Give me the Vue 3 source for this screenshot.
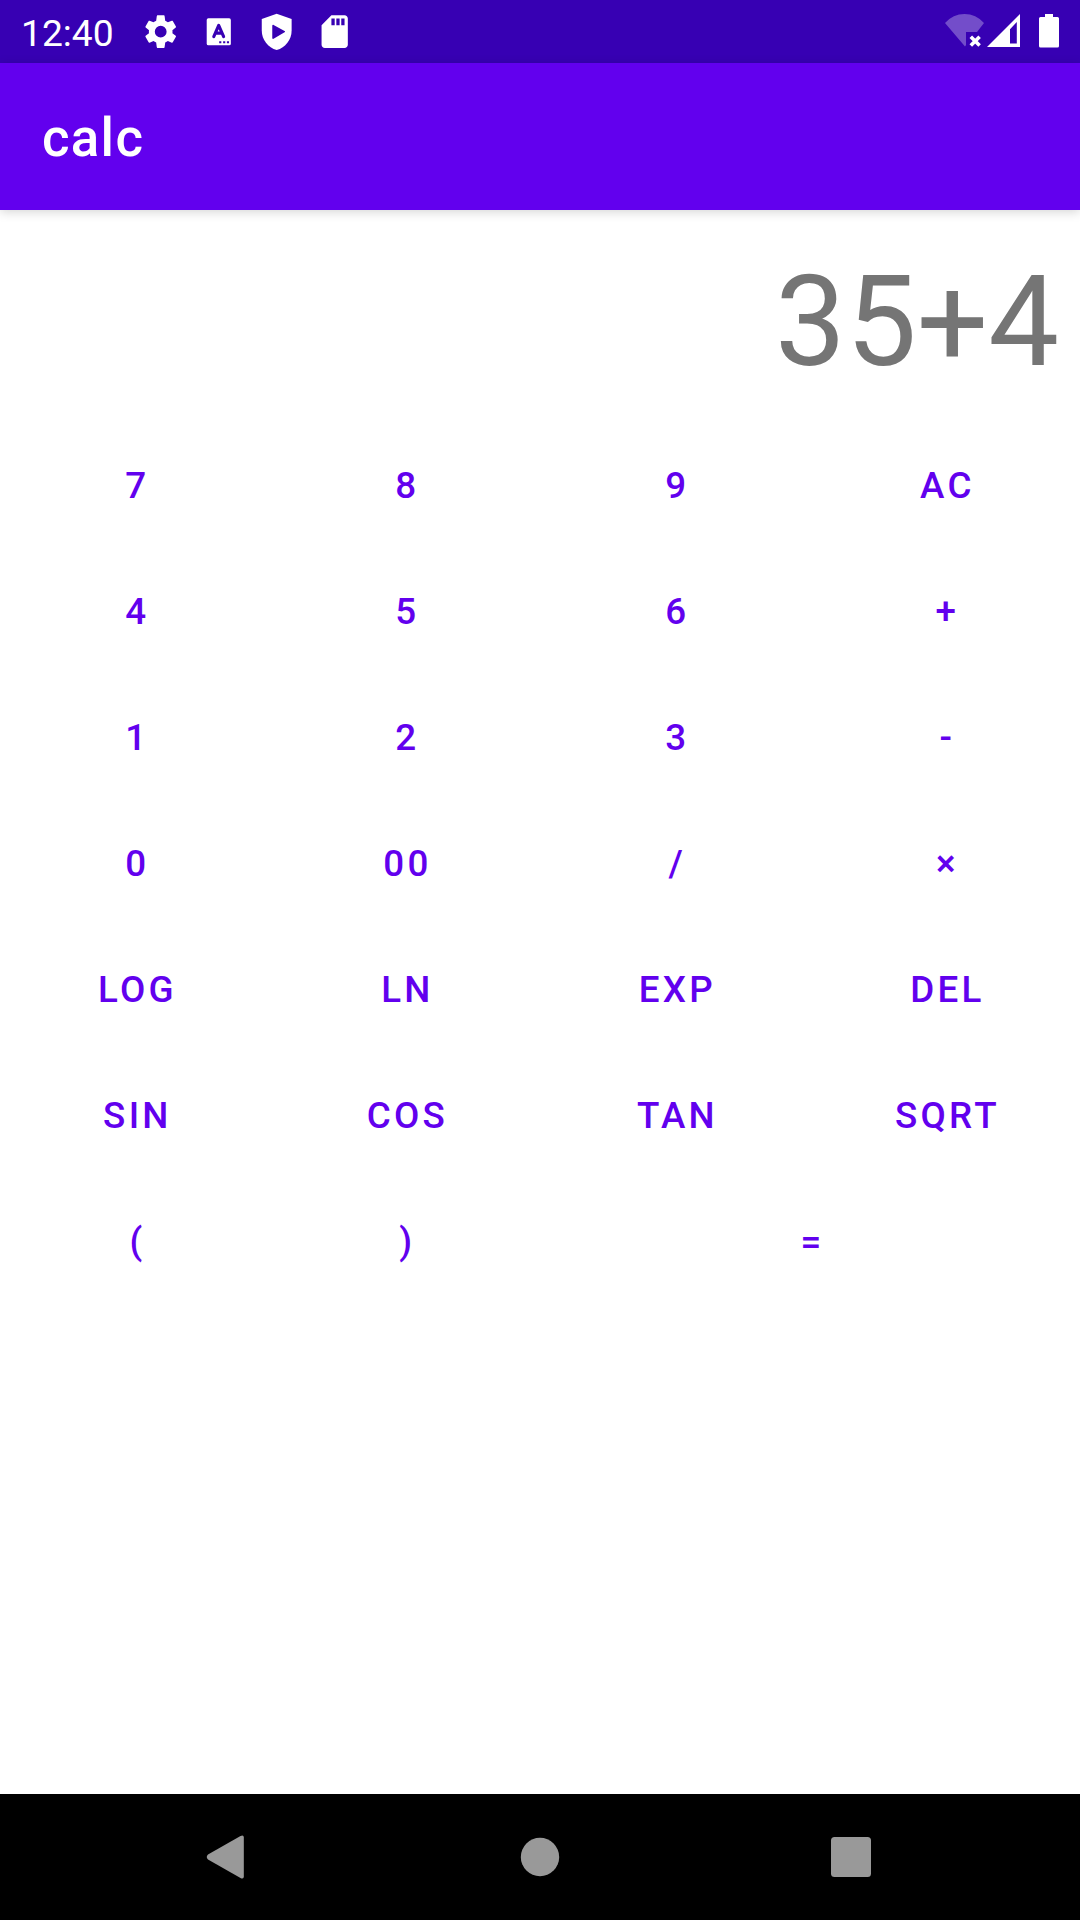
<script setup>
import { ref } from 'vue'

const expression = ref('35+4')
const keys = [
  '7', '8', '9', 'AC',
  '4', '5', '6', '+',
  '1', '2', '3', '-',
  '0', '00', '/', '×',
  'LOG', 'LN', 'EXP', 'DEL',
  'SIN', 'COS', 'TAN', 'SQRT',
  '(', ')', '=',
]
</script>

<template>
  <div class="screen">
    <header class="status">
      <span class="clock">12:40</span>
      <div class="notifications">
        <svg viewBox="0 0 24 24"><path d="M19.14 12.94c.04-.3.06-.61.06-.94 0-.32-.02-.64-.07-.94l2.03-1.58c.18-.14.23-.41.12-.61l-1.92-3.32c-.12-.22-.37-.29-.59-.22l-2.39.96c-.5-.38-1.03-.7-1.62-.94L14.4 2.61c-.04-.24-.24-.61-.48-.61h-3.84c-.24 0-.43.37-.47.61l-.36 2.74c-.59.24-1.13.57-1.62.94l-2.39-.96c-.22-.08-.47 0-.59.22L2.740 8.87c-.12.21-.08.47.12.61l2.03 1.58c-.05.3-.09.63-.09.94s.02.64.07.94l-2.03 1.58c-.18.14-.23.41-.12.61l1.92 3.32c.12.22.37.29.59.22l2.39-.96c.5.38 1.03.7 1.62.94l.36 2.74c.05.24.24.61.48.61h3.84c.24 0 .44-.37.47-.61l.36-2.74c.59-.24 1.13-.56 1.62-.94l2.39.96c.22.08.47 0 .59-.22l1.92-3.32c.12-.22.07-.47-.12-.61l-2.010-1.58zM12 15.6A3.6 3.6 0 1 1 12 8.4a3.6 3.6 0 0 1 0 7.2z" /></svg>
        <svg viewBox="0 0 24 24">
          <rect x="4.7" y="3.8" width="14.7" height="16.5" rx="1" />
          <path class="ink-line" d="M9 15 L12 8.2 L15 15 M10 12.9 H14" />
          <path class="ink" d="M12.3 17.8h1.3v1.3h-1.3zM14.7 17.8h1.3v1.3h-1.3zM17 17.8h1.3v1.3h-1.3z" />
        </svg>
        <svg viewBox="0 0 24 24">
          <path d="M12 1 2.9 4.3v6.9c0 5.7 3.8 10.3 9.1 12 5.3-1.7 9.1-6.3 9.1-12V4.3z" />
          <path class="ink" d="M9.3 8.4c0-.5.4-.7.8-.5l6.7 3.7c.4.2.4.6 0 .8l-6.7 3.9c-.4.2-.8 0-.8-.5z" />
        </svg>
        <svg viewBox="0 0 24 24"><path d="M18 2h-8L4 8v12c0 1.1.9 2 2 2h12c1.1 0 2-.9 2-2V4c0-1.1-.9-2-2-2zm-6 6h-2V4h2v4zm3 0h-2V4h2v4zm3 0h-2V4h2v4z" /></svg>
      </div>
      <svg class="system" viewBox="0 0 160 63">
        <path opacity=".3" d="M25 23Q33 14 44.5 14T64 23L57 32H46V45L45 46.5Z" />
        <path class="cross" d="M50.8 36.8l8.800 8.800M59.6 36.8l-8.8 8.8" />
        <path fill-rule="evenodd" d="M67 47L100 14V47ZM90 29.3V43.5H96.8V22Z" />
        <path d="M125 14h8v3h4.5q1.500 0 1.500 1.500v27.500q0 1.500-1.500 1.500h-17q-1.500 0-1.500-1.500V18.500q0-1.500 1.500-1.500H125z" />
      </svg>
    </header>

    <div class="appbar"><h1>calc</h1></div>

    <main>
      <div class="display">{{ expression }}</div>
      <div class="keypad">
        <button v-for="key in keys" :key="key" type="button" :class="{ wide: key === '=' }">{{ key }}</button>
      </div>
    </main>

    <nav>
      <svg viewBox="0 0 1080 126">
        <path d="M208 60.5L240.5 42Q243.8 40.5 243.8 43.5V82.5Q243.8 85.5 240.5 84L208 65.5Q205.5 63 208 60.5Z" />
        <circle cx="540" cy="63" r="19.2" />
        <rect x="831" y="43" width="40" height="40" rx="3.5" />
      </svg>
    </nav>
  </div>
</template>

<style>
body {
  margin: 0;
}
</style>

<style scoped>
.screen {
  width: 1080px;
  height: 1920px;
  display: flex;
  flex-direction: column;
  overflow: hidden;
  background: #fff;
  font-family: Roboto, sans-serif;
}
.status {
  height: 63px;
  flex: none;
  display: flex;
  align-items: center;
  background: #3700b3;
  color: #fff;
}
.clock {
  width: 120.4px;
  padding-left: 21px;
  font-size: 37.2px;
  line-height: 43px;
  padding-top: 3px;
}
.notifications {
  display: flex;
  gap: 18.6px;
}
.notifications svg {
  width: 39.4px;
  height: 39.4px;
}
svg {
  display: block;
  fill: #fff;
}
.ink {
  fill: #3700b3;
}
.ink-line {
  fill: none;
  stroke: #3700b3;
  stroke-width: 1.9;
  stroke-linecap: round;
  stroke-linejoin: round;
}
.system {
  width: 160px;
  height: 63px;
  margin-left: auto;
}
.cross {
  fill: none;
  stroke: #fff;
  stroke-width: 3.6;
}
.appbar {
  height: 147px;
  flex: none;
  display: flex;
  align-items: center;
  padding-left: 42px;
  background: #6200ee;
  box-shadow: 0 2px 10px rgba(0, 0, 0, 0.17);
}
h1 {
  margin: 0;
  padding-top: 2px;
  color: #fff;
  font-size: 52.8px;
  font-weight: 500;
  line-height: 62px;
  letter-spacing: 1.3px;
}
main {
  flex: 1;
}
.display {
  height: 212px;
  box-sizing: border-box;
  padding: 38px 21px 0 0;
  color: #757575;
  font-size: 126px;
  line-height: 148px;
  text-align: right;
}
.keypad {
  display: grid;
  grid-template-columns: repeat(4, 270px);
  grid-auto-rows: 126px;
}
button {
  border: 0;
  padding: 0 0 0 4.8px;
  background: none;
  color: #6200ee;
  font: 500 36.75px/43px Roboto, sans-serif;
  letter-spacing: 0.0893em;
}
.wide {
  grid-column: span 2;
}
nav {
  height: 126px;
  flex: none;
  background: #000;
}
nav svg {
  width: 1080px;
  height: 126px;
  fill: #999;
}
</style>
